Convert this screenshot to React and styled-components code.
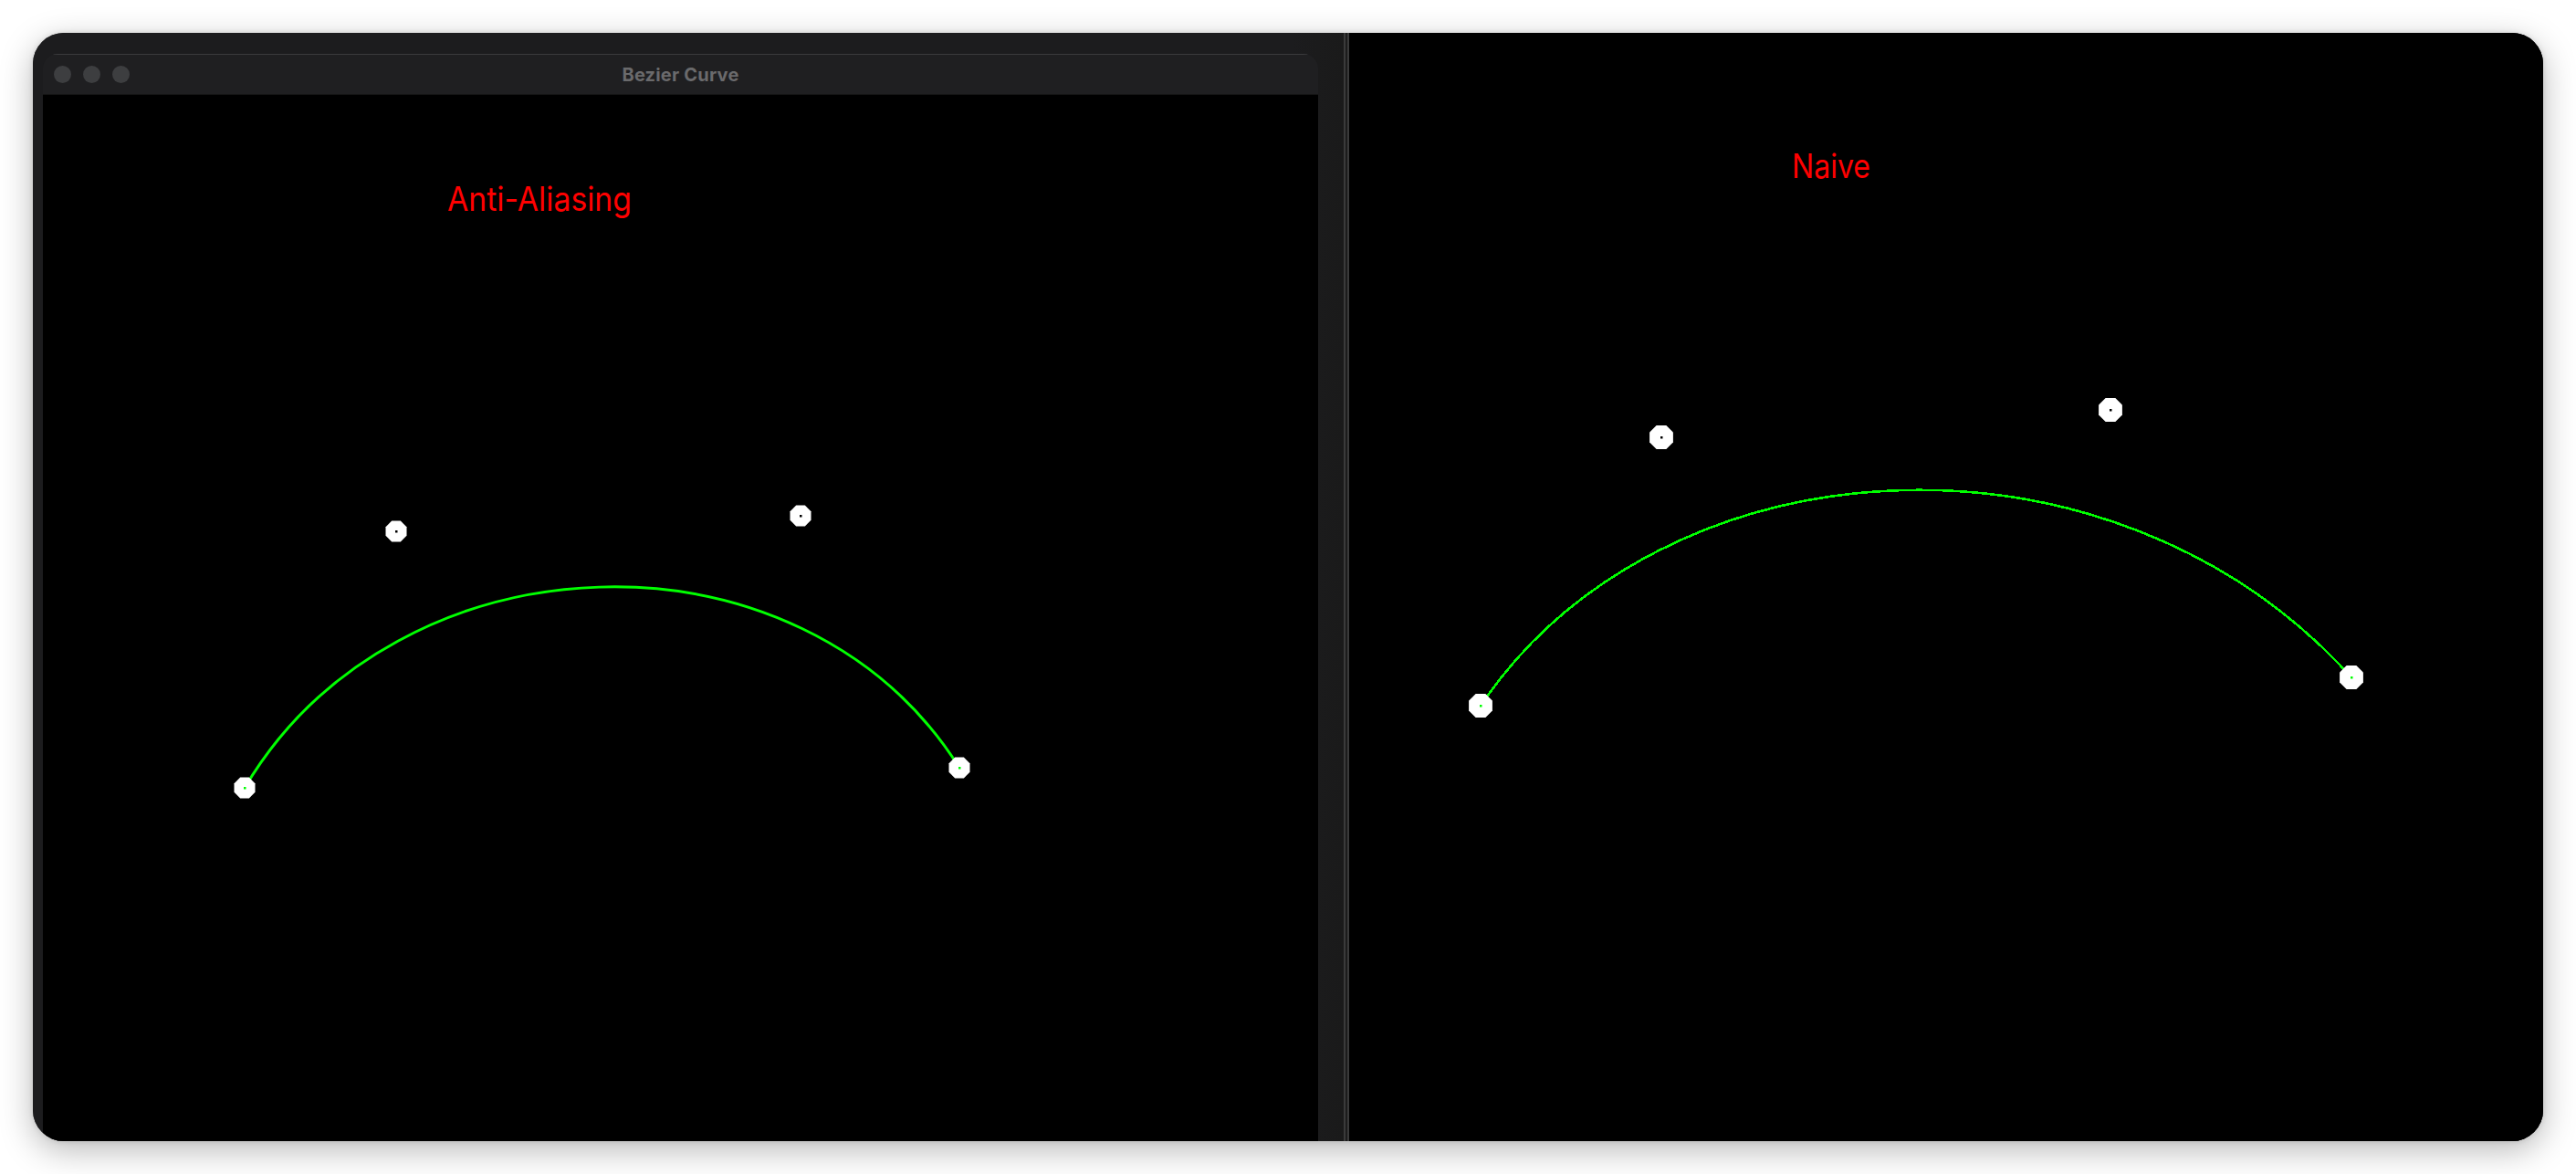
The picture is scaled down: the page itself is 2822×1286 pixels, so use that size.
import React from 'react'
import styled, { createGlobalStyle } from 'styled-components'

const Global = createGlobalStyle`
  html, body {
    margin: 0;
    padding: 0;
    background: #ffffff;
    width: 2822px;
    height: 1286px;
    overflow: hidden;
  }
  #root {
    width: 100%;
    height: 100%;
  }
`;

const Page = styled.div`
  box-sizing: border-box;
  width: 2822px;
  height: 1286px;
  padding: 36px;
  background: #ffffff;
`;

const Frame = styled.div`
  display: flex;
  width: 100%;
  height: 100%;
  border-radius: 34px;
  overflow: hidden;
  background: #1c1c1e;
  box-shadow: 0 10px 36px rgba(0, 0, 0, 0.28), 0 0 6px rgba(0, 0, 0, 0.12);
`;

const LeftPane = styled.div`
  box-sizing: border-box;
  width: 1436px;
  flex: none;
  display: flex;
  padding: 23px 28px 0 11px;
  background: linear-gradient(90deg, #1c1c1e 0%, #1c1c1e 96%, #1a1a1a 100%);
`;

const Window = styled.div`
  flex: 1;
  display: flex;
  flex-direction: column;
  border-radius: 16px 16px 0 0;
  overflow: hidden;
`;

const TitleBar = styled.div`
  position: relative;
  height: 45px;
  flex: none;
  display: flex;
  align-items: center;
  justify-content: center;
  background: #1f1f21;
  border-top: 1px solid #3a3a3c;
  border-bottom: 1px solid #141414;
  box-sizing: border-box;
`;

const Lights = styled.div`
  position: absolute;
  left: 12px;
  top: 12px;
  display: flex;
  gap: 13px;
`;

const Light = styled.span`
  width: 19px;
  height: 19px;
  border-radius: 50%;
  background: #3d3e40;
`;

const Title = styled.span`
  font-family: Inter, "Liberation Sans", sans-serif;
  font-weight: 700;
  font-size: 20px;
  color: #6a6a6c;
  letter-spacing: 0.2px;
`;

const Canvas = styled.svg`
  display: block;
  flex: 1;
  width: 100%;
  background: #000000;
`;

const Divider = styled.div`
  width: 6px;
  flex: none;
  background: linear-gradient(90deg, #3a3a3a 0 2px, #1c1c1c 2px 4px, #3a3a3a 4px 6px);
`;

const RightPane = styled.div`
  flex: 1;
  display: flex;
  background: #000000;
`;

const leftScene = {
  w: 1397,
  h: 1146,
  label: 'Anti-Aliasing',
  labelX: 443,
  labelY: 127,
  labelW: 202,
  r: 12.5,
  pts: [[221, 759], [387, 478], [830, 461], [1004, 737]],
  smooth: true,
}

const rightScene = {
  w: 1308,
  h: 1214,
  label: 'Naive',
  labelX: 485,
  labelY: 159,
  labelW: 86,
  r: 14,
  pts: [[144, 737], [342, 443], [834, 413], [1098, 706]],
  smooth: false,
}

function octagon(cx, cy, r) {
  const out = []
  for (let i = 0; i < 8; i++) {
    const a = Math.PI / 8 + (i * Math.PI) / 4
    out.push(`${(cx + r * Math.cos(a)).toFixed(1)},${(cy + r * Math.sin(a)).toFixed(1)}`)
  }
  return out.join(' ')
}

const Scene = ({ scene }) => {
  const [p0, p1, p2, p3] = scene.pts
  const d = `M${p0[0]} ${p0[1]} C${p1[0]} ${p1[1]} ${p2[0]} ${p2[1]} ${p3[0]} ${p3[1]}`
  return (
    <Canvas viewBox={`0 0 ${scene.w} ${scene.h}`} preserveAspectRatio="xMinYMin slice">
      <text
        x={scene.labelX}
        y={scene.labelY}
        fill="#ff0000"
        fontFamily='Inter, "Liberation Sans", sans-serif'
        fontWeight="400"
        fontSize="37"
        textLength={scene.labelW}
        lengthAdjust="spacingAndGlyphs"
      >
        {scene.label}
      </text>
      <path
        d={d}
        fill="none"
        stroke="#00ff00"
        strokeWidth={scene.smooth ? 3 : 2.6}
        shapeRendering={scene.smooth ? 'geometricPrecision' : 'crispEdges'}
      />
      {scene.pts.map(([x, y], i) => (
        <g key={i}>
          <polygon points={octagon(x, y, scene.r)} fill="#ffffff" />
          <rect
            x={x - 1}
            y={y - 1}
            width="2.5"
            height="2.5"
            fill={i === 0 || i === 3 ? '#00ff00' : '#000000'}
          />
        </g>
      ))}
    </Canvas>
  )
}

const App = () => {
  return (
    <>
      <Global />
      <Page>
        <Frame>
          <LeftPane>
            <Window>
              <TitleBar>
                <Lights>
                  <Light />
                  <Light />
                  <Light />
                </Lights>
                <Title>Bezier Curve</Title>
              </TitleBar>
              <Scene scene={leftScene} />
            </Window>
          </LeftPane>
          <Divider />
          <RightPane>
            <Scene scene={rightScene} />
          </RightPane>
        </Frame>
      </Page>
    </>
  )
}

export default App
